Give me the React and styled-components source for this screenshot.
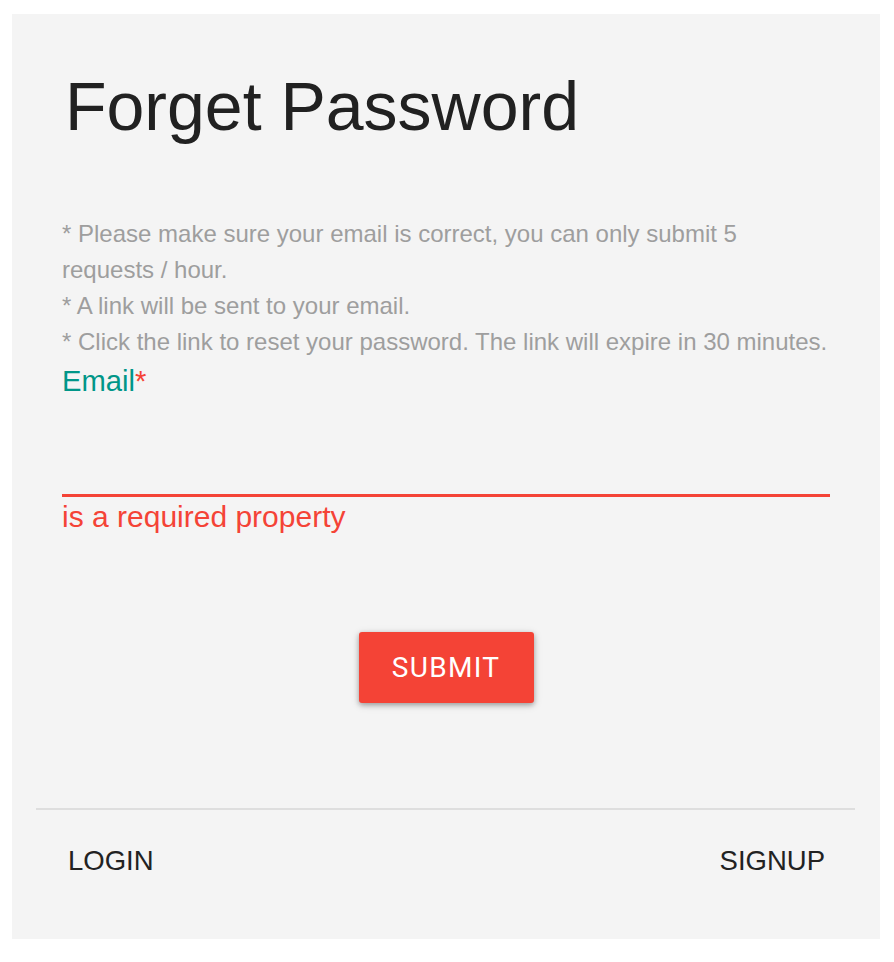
import React from "react";
import styled, { createGlobalStyle } from "styled-components";

const GlobalStyle = createGlobalStyle`
  body {
    margin: 0;
    background: #ffffff;
    font-family: "Liberation Sans", Arial, sans-serif;
  }
`;

const Page = styled.div`
  padding: 14px 14px 0 12px;
`;

const Card = styled.div`
  width: 868px;
  background: #f4f4f4;
  padding-bottom: 63px;
`;

const Content = styled.div`
  padding: 53px 50px 0;
`;

const Title = styled.h1`
  margin: 0 0 0 3px;
  font-size: 68px;
  line-height: 78px;
  font-weight: 400;
  color: #212121;
`;

const Notes = styled.div`
  margin-top: 71px;
  font-size: 24px;
  line-height: 36px;
  color: #9e9e9e;
`;

const Note = styled.p`
  margin: 0;
`;

const Label = styled.label`
  display: block;
  font-size: 29.2px;
  line-height: 43.2px;
  color: #009688;
`;

const Required = styled.span`
  color: #f44336;
`;

const Input = styled.input`
  display: block;
  box-sizing: content-box;
  width: 100%;
  height: 91px;
  padding: 0;
  margin: 0;
  border: none;
  border-bottom: 3px solid #f44336;
  background: transparent;
  outline: none;
  font-size: 28px;
  font-family: inherit;
`;

const ErrorText = styled.div`
  margin-top: 3px;
  font-size: 30px;
  line-height: 34.5px;
  color: #f44336;
`;

const Actions = styled.div`
  display: flex;
  justify-content: center;
  margin: 97px 0 105px;
`;

const SubmitButton = styled.button`
  width: 175px;
  height: 71px;
  border: none;
  border-radius: 3px;
  background: #f44336;
  color: #ffffff;
  font-family: Roboto, "Liberation Sans", sans-serif;
  font-size: 28px;
  font-weight: 400;
  letter-spacing: 1.3px;
  box-shadow: 0 2px 5px rgba(0, 0, 0, 0.28), 0 2px 10px rgba(0, 0, 0, 0.14);
  cursor: pointer;
`;

const Divider = styled.hr`
  margin: 0 25px 0 24px;
  border: none;
  border-top: 2px solid #dedede;
`;

const Footer = styled.div`
  display: flex;
  justify-content: space-between;
  padding: 35px 55px 0 56px;
`;

const FooterLink = styled.a`
  font-size: 27.5px;
  line-height: 31.6px;
  color: #222222;
  text-decoration: none;
`;

export default function App() {
  return (
    <Page>
      <GlobalStyle />
      <Card>
        <Content>
          <Title>Forget Password</Title>
          <Notes>
            <Note>
              * Please make sure your email is correct, you can only submit 5
              requests / hour.
            </Note>
            <Note>* A link will be sent to your email.</Note>
            <Note>
              * Click the link to reset your password. The link will expire in
              30 minutes.
            </Note>
          </Notes>
          <Label htmlFor="email">
            Email<Required>*</Required>
          </Label>
          <Input id="email" type="email" />
          <ErrorText>is a required property</ErrorText>
          <Actions>
            <SubmitButton type="button">SUBMIT</SubmitButton>
          </Actions>
        </Content>
        <Divider />
        <Footer>
          <FooterLink href="#login">LOGIN</FooterLink>
          <FooterLink href="#signup">SIGNUP</FooterLink>
        </Footer>
      </Card>
    </Page>
  );
}
